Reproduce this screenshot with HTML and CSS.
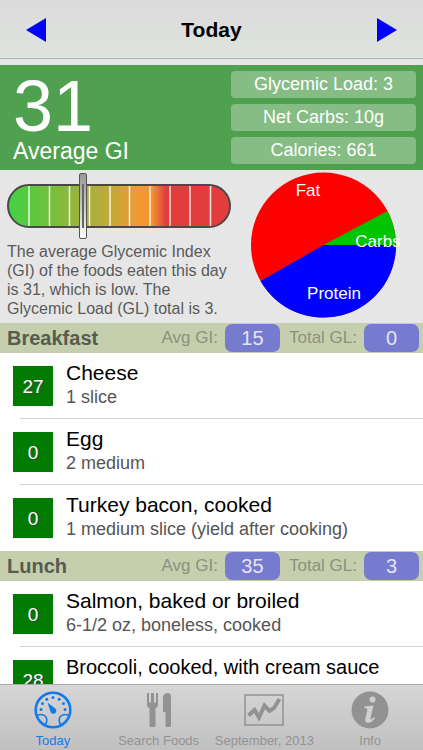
FILE: index.html
```html
<!DOCTYPE html>
<html lang="en">
<head>
<meta charset="utf-8">
<meta name="viewport" content="width=device-width, initial-scale=1">
<title>Today</title>
<link rel="stylesheet" href="styles.css">
</head>
<body>
<header class="navbar">
  <button class="nav-button" type="button" aria-label="Previous day">
    <svg width="20" height="24" viewBox="0 0 20 24"><path d="M0 12 20 0V24Z" fill="#00f"/></svg>
  </button>
  <h1 class="nav-title">Today</h1>
  <button class="nav-button" type="button" aria-label="Next day">
    <svg width="20" height="24" viewBox="0 0 20 24"><path d="M20 12 0 0V24Z" fill="#00f"/></svg>
  </button>
</header>

<main class="content">
  <section class="totals">
    <div class="average">
      <div class="average-value">31</div>
      <div class="average-label">Average GI</div>
    </div>
    <div class="stats">
      <div class="stat">Glycemic Load: 3</div>
      <div class="stat">Net Carbs: 10g</div>
      <div class="stat">Calories: 661</div>
    </div>
  </section>

  <section class="summary">
    <div class="summary-text">
      <svg class="gauge" width="226" height="68" viewBox="0 0 226 68" role="img" aria-label="GI scale">
        <defs>
          <linearGradient id="scale">
            <stop offset="0" stop-color="#43d243"/>
            <stop offset=".1" stop-color="#59c83f"/>
            <stop offset=".32" stop-color="#9bb43b"/>
            <stop offset=".46" stop-color="#c2a938"/>
            <stop offset=".58" stop-color="#ee9a34"/>
            <stop offset=".65" stop-color="#f59331"/>
            <stop offset=".71" stop-color="#e23c3c"/>
            <stop offset="1" stop-color="#e23c3c"/>
          </linearGradient>
          <linearGradient id="marker" x2="0" y2="1">
            <stop offset="0" stop-color="#999"/>
            <stop offset=".55" stop-color="#ccc"/>
            <stop offset="1" stop-color="#fff"/>
          </linearGradient>
        </defs>
        <rect x="1" y="14" width="222" height="42" rx="21" fill="url(#scale)" stroke="#4a4848" stroke-width="2"/>
        <path d="M22 15V55M42.500 15V55M62.500 15V55M82.500 15V55M103 15V55M122.500 15V55M143 15V55M163 15V55M183 15V55M203.500 15V55" stroke="#fff" stroke-opacity=".85" stroke-width="1.500"/>
        <rect x="72.500" y="2.500" width="7" height="65" rx="1.500" fill="url(#marker)" stroke="#555"/>
        <path d="M76 13V57" stroke="#666" stroke-width="2"/>
      </svg>
      <p class="description">The average Glycemic Index (GI) of the foods eaten this day is 31, which is low. The Glycemic Load (GL) total is 3.</p>
    </div>
    <svg class="pie" width="166" height="148" viewBox="0 0 166 148" role="img" aria-label="Calorie sources">
      <circle cx="80.500" cy="74" r="72.500" fill="#f00"/>
      <path d="M80.500 74H153A72.500 72.500 0 0 1 17.500 110Z" fill="#00f"/>
      <path d="M80.500 74H153A72.500 72.500 0 0 0 144.500 40Z" fill="#00c400"/>
      <text class="pie-label" x="65" y="25">Fat</text>
      <text class="pie-label" x="135" y="76">Carbs</text>
      <text class="pie-label" x="91" y="128">Protein</text>
    </svg>
  </section>

  <section>
    <div class="meal-header">
      <h2 class="meal-name">Breakfast</h2>
      <div class="meal-stat"><span>Avg GI:</span><span class="meal-value">15</span></div>
      <div class="meal-stat"><span>Total GL:</span><span class="meal-value">0</span></div>
    </div>
    <ul class="foods">
      <li class="food"><span class="badge">27</span><div class="food-text"><div class="food-name">Cheese</div><div class="food-portion">1 slice</div></div></li>
      <li class="food"><span class="badge">0</span><div class="food-text"><div class="food-name">Egg</div><div class="food-portion">2 medium</div></div></li>
      <li class="food"><span class="badge">0</span><div class="food-text"><div class="food-name">Turkey bacon, cooked</div><div class="food-portion">1 medium slice (yield after cooking)</div></div></li>
    </ul>
  </section>

  <section>
    <div class="meal-header">
      <h2 class="meal-name">Lunch</h2>
      <div class="meal-stat"><span>Avg GI:</span><span class="meal-value">35</span></div>
      <div class="meal-stat"><span>Total GL:</span><span class="meal-value">3</span></div>
    </div>
    <ul class="foods">
      <li class="food"><span class="badge">0</span><div class="food-text"><div class="food-name">Salmon, baked or broiled</div><div class="food-portion">6-1/2 oz, boneless, cooked</div></div></li>
      <li class="food"><span class="badge">28</span><div class="food-text"><div class="food-name food-name-long">Broccoli, cooked, with cream sauce</div></div></li>
    </ul>
  </section>
</main>

<nav class="tabbar">
  <a class="tab tab-active" href="#today">
    <svg width="38" height="38" viewBox="0 0 38 38" fill="none" stroke="currentColor">
      <circle cx="19" cy="19" r="17.300" stroke-width="2.600"/>
      <path d="M3.500 24.500C8 22 12.500 24.500 12.800 28.500 13 31 12 33 10.500 34M34.500 24.500C30 22 25.500 24.500 25.200 28.500 25 31 26 33 27.500 34" stroke-width="1.500"/>
      <g fill="currentColor" stroke="none">
        <circle cx="7" cy="18.500" r="1.500"/><circle cx="8.500" cy="12.500" r="1.500"/><circle cx="12.800" cy="8.300" r="1.500"/><circle cx="19" cy="6.500" r="1.500"/><circle cx="25.200" cy="8.300" r="1.500"/><circle cx="29.500" cy="12.500" r="1.500"/><circle cx="31" cy="18.500" r="1.500"/>
        <path d="M13.500 11.500 21.300 17.500A3 3 0 1 1 16.600 21Z"/>
      </g>
    </svg>
    <span>Today</span>
  </a>
  <a class="tab" href="#search">
    <svg width="38" height="38" viewBox="0 0 38 38" fill="currentColor">
      <path d="M7 2H9V11.500H11V2H14V11.500H16V2H18V13.500Q18 16.500 15.500 17V34.500Q15.500 36 14 36H11Q9.500 36 9.500 34.500V17Q7 16.500 7 13.500Z"/>
      <path d="M23 6Q24 2 27.500 2 31 2 31 6V34.500Q31 36 29.500 36H27Q25.500 36 25.500 34.500V21H23Z"/>
    </svg>
    <span>Search Foods</span>
  </a>
  <a class="tab" href="#month">
    <svg width="40" height="38" viewBox="0 0 40 38" fill="none" stroke="currentColor">
      <rect x="1" y="4" width="38" height="30" stroke-width="1.500"/>
      <path d="M4.500 24.500 10.500 19 15 26.500 20.500 14.500 25.500 20 30 17 35.500 8" stroke-width="4"/>
    </svg>
    <span>September, 2013</span>
  </a>
  <a class="tab" href="#info">
    <svg width="38" height="38" viewBox="0 0 38 38">
      <circle cx="19" cy="19" r="18.500" fill="currentColor"/>
      <circle cx="21.500" cy="8.500" r="3" fill="#d0d0d0"/>
      <path d="M13.500 15.500 22.500 14.500 19.500 27Q19.200 29 20.500 28.200L23 26 24 27.200Q20.500 31.800 16.800 31.800 13.500 31.500 14.300 27.800L16.500 18.500Q16.500 17 13.500 16.900Z" fill="#d0d0d0"/>
    </svg>
    <span>Info</span>
  </a>
</nav>
</body>
</html>
```
FILE: styles.css
```css
* {
  box-sizing: border-box;
}

body {
  display: flex;
  flex-direction: column;
  height: 100vh;
  margin: 0;
  background: #fff;
  color: #000;
  font-family: "Liberation Sans", Arial, sans-serif;
}

h1, h2, p, ul {
  margin: 0;
  padding: 0;
}

svg {
  display: block;
  flex: none;
}

.navbar {
  display: flex;
  flex: none;
  align-items: center;
  justify-content: space-between;
  padding: 17px 26px 16px;
  border-bottom: 1px solid #afb9b0;
  background: linear-gradient(#dbdbdb, #dfe3df);
}

.nav-button {
  padding: 0;
  border: 0;
  background: none;
}

.nav-title {
  font-size: 21px;
  line-height: 25px;
}

.content {
  flex: 1;
  min-height: 0;
  overflow: hidden;
}

.totals {
  display: flex;
  justify-content: space-between;
  padding: 6px 7px 6px 13px;
  border-top: 6px solid #e6e6e6;
  background: #50a14f;
  color: #fff;
}

.average-value {
  font-size: 72px;
  line-height: 70px;
}

.average-label {
  font-size: 23px;
  line-height: 20px;
}

.stats {
  display: flex;
  flex: 0 0 185px;
  flex-direction: column;
  gap: 6px;
}

.stat {
  border-radius: 4px;
  background: #86bd85;
  font-size: 18px;
  line-height: 27px;
  text-align: center;
}

.summary {
  display: flex;
  justify-content: space-between;
  padding: 1px 14px 4px 7px;
  background: #e6e6e6;
}

.summary-text {
  flex: 0 1 230px;
}

.description {
  padding-top: 3px;
  color: #5a5a5a;
  font-size: 16px;
  line-height: 19px;
}

.pie-label {
  fill: #fff;
  font-size: 17px;
  text-anchor: middle;
}

.meal-header {
  display: flex;
  align-items: center;
  gap: 9px;
  height: 30px;
  padding: 0 4px 0 7px;
  background: #c5cfae;
}

.meal-name {
  flex: 1;
  color: #575b50;
  font-size: 20px;
}

.meal-stat {
  display: flex;
  align-items: center;
  gap: 7px;
  color: #8b917d;
  font-size: 17px;
}

.meal-value {
  width: 55px;
  border-radius: 7px;
  background: #777bd0;
  color: #e3e4f5;
  font-size: 20px;
  line-height: 28px;
  text-align: center;
}

.foods {
  background: #fff;
  list-style: none;
}

.food {
  display: flex;
  gap: 13px;
  height: 66px;
  padding-left: 13px;
  background: linear-gradient(#d3d3d3, #d3d3d3) 20px 100% / 100% 1px no-repeat;
}

.food:last-child {
  background: none;
}

.badge {
  flex: none;
  width: 40px;
  height: 40px;
  margin-top: 13px;
  background: #007b00;
  color: #fff;
  font-size: 19px;
  line-height: 42px;
  text-align: center;
  text-shadow: 1px 1px 1px #444;
}

.food-text {
  padding-top: 8px;
  white-space: nowrap;
}

.food-name {
  font-size: 21px;
  line-height: 24px;
}

.food-name-long {
  font-size: 20px;
}

.food-portion {
  color: #555;
  font-size: 18px;
  line-height: 24px;
}

.tabbar {
  display: flex;
  flex: none;
  border-top: 1px solid #aaa;
  background: linear-gradient(#d6d6d6, #c0c0c0);
}

.tab {
  display: flex;
  flex: 1 1 0;
  flex-direction: column;
  align-items: center;
  gap: 4px;
  min-width: 0;
  padding: 6px 0 1px;
  color: #929292;
  font-size: 13px;
  line-height: 16px;
  text-decoration: none;
  white-space: nowrap;
}

.tab-active {
  color: #127bec;
}
```
